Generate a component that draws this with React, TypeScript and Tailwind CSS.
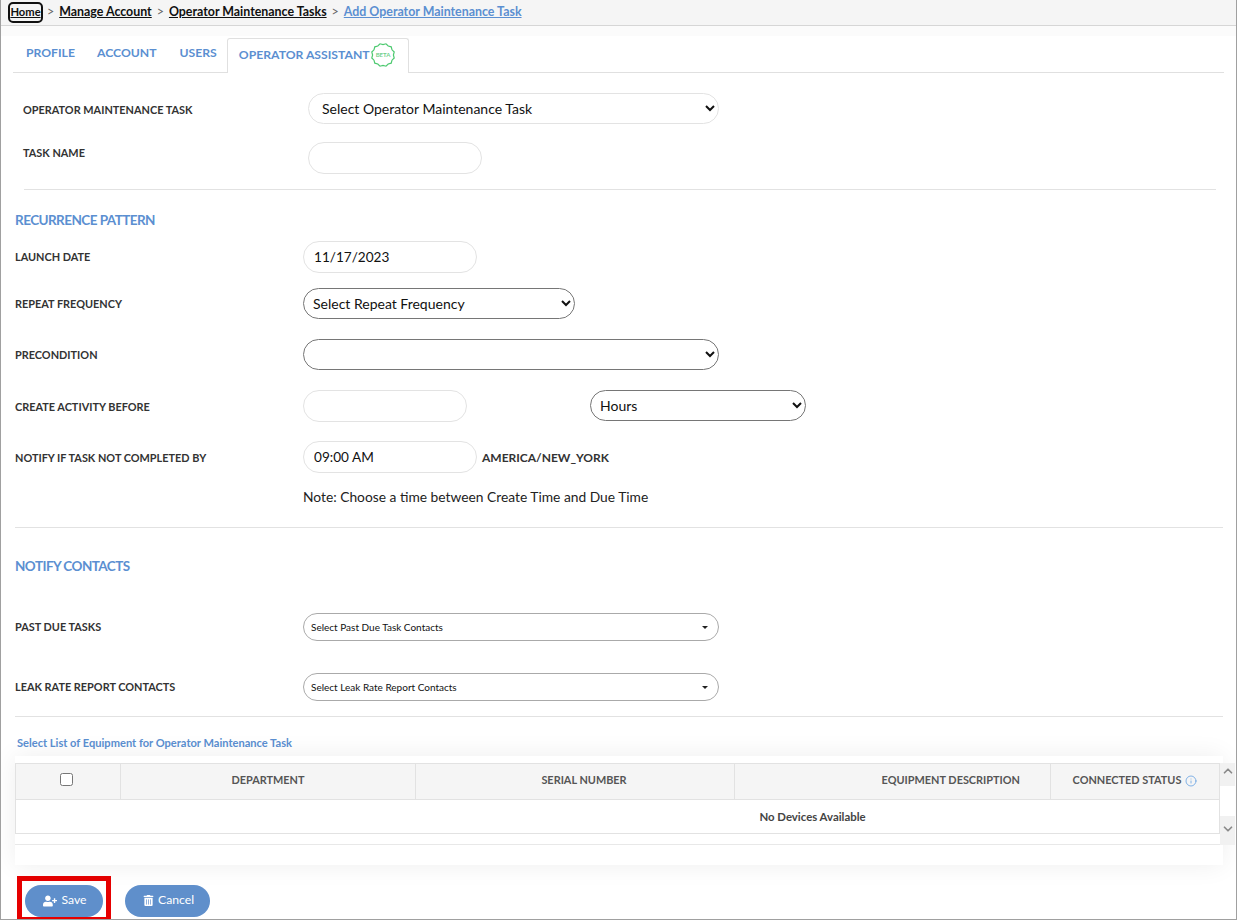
import { FaUserPlus, FaTrashAlt } from "react-icons/fa";
import { Info, ChevronUp, ChevronDown } from "lucide-react";

function Beta() {
  const pts: string[] = [];
  for (let i = 0; i < 24; i++) {
    const r = i % 2 ? 11.6 : 10.4;
    const a = (i * Math.PI) / 12;
    pts.push(`${12 + r * Math.cos(a)},${12 + r * Math.sin(a)}`);
  }
  return (
    <svg width="24" height="24" viewBox="0 0 24 24" className="ml-[1px] shrink-0">
      <polygon points={pts.join(" ")} fill="#fff" stroke="#4cc96f" strokeWidth="1.2" />
      <text x="12" y="14" textAnchor="middle" fontSize="6" fontWeight="700" fill="#6fd08c" fontFamily="Lato">BETA</text>
    </svg>
  );
}

function Input({ w, value }: { w: string; value?: string }) {
  return (
    <input
      readOnly
      value={value ?? ""}
      className={`${w} h-[32px] rounded-full border border-[#e3e3e3] bg-white px-[10px] text-[13.6px] text-[#111] outline-none`}
    />
  );
}

function Sel({ w, text, pl = "pl-[5px]" }: { w: string; text: string; pl?: string }) {
  return (
    <select className={`${w} ${pl} h-[31px] rounded-full border border-[#767676] bg-white text-[14px] text-[#111] outline-none`}>
      <option>{text}</option>
    </select>
  );
}

function Multi({ text }: { text: string }) {
  return (
    <div className="flex h-[28px] w-[416px] items-center justify-between rounded-full border border-[#aaa] bg-white pl-[7px] pr-[10px] text-[10px] text-[#111]">
      <span>{text}</span>
      <span className="h-0 w-0 border-x-[3px] border-t-[3px] border-x-transparent border-t-[#222]" />
    </div>
  );
}

function Label({ children, w = "w-[288px]", pt = "" }: { children: React.ReactNode; w?: string; pt?: string }) {
  return <div className={`${w} ${pt} shrink-0 text-[10.9px] font-bold text-[#333]`}>{children}</div>;
}

function Heading({ children, mt }: { children: React.ReactNode; mt: string }) {
  return <div className={`${mt} h-[18px] text-[13.5px] leading-[18px] font-bold tracking-[-0.55px] text-[#5b8fd1]`}>{children}</div>;
}

function Crumb({ children, blue }: { children: React.ReactNode; blue?: boolean }) {
  return <a className={`underline font-bold ${blue ? "text-[#5b8fd1]" : "text-[#111]"}`}>{children}</a>;
}

function Sep() {
  return <span className="mx-[5px] font-normal text-[#666]">&gt;</span>;
}

export default function App() {
  return (
    <div className="h-[920px] w-[1237px] overflow-hidden border-x border-b border-[#a0a0a0] bg-white font-['Lato',sans-serif]">
      <div className="flex h-[26px] items-center border-b border-[#d6d6d6] bg-[#f5f5f5] pl-[9px] text-[12.4px]">
        <a className="mr-[1px] w-[31px] rounded-[3px] text-center text-[11.2px] font-bold text-[#111] underline outline-2 outline-[#111]">Home</a>
        <Sep />
        <Crumb>Manage Account</Crumb>
        <Sep />
        <Crumb>Operator Maintenance Tasks</Crumb>
        <Sep />
        <Crumb blue>Add Operator Maintenance Task</Crumb>
      </div>
      <div className="h-[10px] bg-[#fbfbfb]" />

      <div className="ml-[12px] mr-[12px] flex h-[37px] items-end border-b border-[#e0e0e0] text-[12px] font-bold text-[#5b8fd1]">
        <div className="flex h-[36px] items-center pl-[13px] pb-[1px] text-[12.2px]">PROFILE</div>
        <div className="flex h-[36px] items-center pl-[22px] pb-[1px] text-[12.2px]">ACCOUNT</div>
        <div className="flex h-[36px] items-center pl-[23px] pb-[1px] text-[12.2px]">USERS</div>
        <div className="relative top-[1px] ml-[10px] flex h-[35px] w-[182px] items-center rounded-t-[3px] border border-b-0 border-[#e0e0e0] bg-white pb-[2px] pl-[11px] text-[12.2px]">
          OPERATOR ASSISTANT
          <Beta />
        </div>
      </div>

      <div className="mt-[20px] flex items-center pl-[22px]">
        <Label w="w-[285px]" pt="pt-[4px]">OPERATOR MAINTENANCE TASK</Label>
        <select className="h-[31px] w-[411px] rounded-full border border-[#e3e3e3] bg-white pl-[9px] text-[14px] text-[#111] outline-none">
          <option>Select Operator Maintenance Task</option>
        </select>
      </div>
      <div className="mt-[18px] flex items-start pl-[22px]">
        <div className="pt-[3px]">
          <Label w="w-[285px]">TASK NAME</Label>
        </div>
        <Input w="w-[174px]" />
      </div>

      <div className="ml-[23px] mr-[20px] mt-[15px] h-px bg-[#e2e2e2]" />

      <div className="pl-[14px]">
        <Heading mt="mt-[21px]">RECURRENCE PATTERN</Heading>
        <div className="mt-[12px] flex items-center">
          <Label>LAUNCH DATE</Label>
          <Input w="w-[174px]" value="11/17/2023" />
        </div>
        <div className="mt-[15px] flex items-center">
          <Label pt="pt-[2px]">REPEAT FREQUENCY</Label>
          <Sel w="w-[272px]" text="Select Repeat Frequency" />
        </div>
        <div className="mt-[20px] flex items-center">
          <Label pt="pt-[2px]">PRECONDITION</Label>
          <Sel w="w-[416px]" text="" />
        </div>
        <div className="mt-[20px] flex items-center">
          <Label pt="pt-[2px]">CREATE ACTIVITY BEFORE</Label>
          <Input w="w-[164px]" />
          <div className="ml-[123px] self-start">
            <Sel w="w-[216px]" text="Hours" />
          </div>
        </div>
        <div className="mt-[19px] flex items-center">
          <Label pt="pt-[2px]">NOTIFY IF TASK NOT COMPLETED BY</Label>
          <Input w="w-[174px]" value="09:00 AM" />
          <span className="ml-[5px] pt-[2px] text-[12px] font-bold text-[#333]">AMERICA/NEW_YORK</span>
        </div>
        <div className="mt-[14px] pl-[288px] text-[13.8px] leading-[20px] text-[#222]">Note: Choose a time between Create Time and Due Time</div>
      </div>

      <div className="ml-[14px] mr-[13px] mt-[20px] h-px bg-[#e2e2e2]" />

      <div className="pl-[14px]">
        <Heading mt="mt-[29px]">NOTIFY CONTACTS</Heading>
        <div className="mt-[38px] flex items-center">
          <Label>PAST DUE TASKS</Label>
          <Multi text="Select Past Due Task Contacts" />
        </div>
        <div className="mt-[32px] flex items-center">
          <Label>LEAK RATE REPORT CONTACTS</Label>
          <Multi text="Select Leak Rate Report Contacts" />
        </div>
      </div>

      <div className="ml-[14px] mr-[13px] mt-[15px] h-px bg-[#e2e2e2]" />

      <div className="ml-[16px] mt-[19px] h-[14px] text-[11.1px] leading-[14px] font-bold text-[#5b8fd1]">
        Select List of Equipment for Operator Maintenance Task
      </div>

      <div className="relative ml-[14px] mr-[13px] mt-[6px] bg-white pt-[7px] pb-[20px] shadow-[0_0_24px_rgba(0,0,0,0.07)]">
        <div className="mr-[3px] border-x border-[#e2e2e2] text-[10.9px] font-bold text-[#555]">
          <div className="flex h-[37px] border-y border-[#e2e2e2] bg-[#f5f5f5]">
            <div className="flex w-[105px] items-center justify-center border-r border-[#e2e2e2] pr-[4px]">
              <input type="checkbox" className="mb-[4px] h-[13px] w-[13px]" />
            </div>
            <div className="flex w-[295px] items-center justify-center border-r border-[#e2e2e2] pb-[2px]">DEPARTMENT</div>
            <div className="flex w-[319px] items-center justify-center border-r border-[#e2e2e2] pb-[2px] pl-[18px]">SERIAL NUMBER</div>
            <div className="flex w-[316px] items-center justify-end border-r border-[#e2e2e2] pb-[2px] pr-[30px]">EQUIPMENT DESCRIPTION</div>
            <div className="flex flex-1 items-center justify-center pb-[2px] pr-[1px] pl-[1px]">
              CONNECTED STATUS
              <Info size={12} strokeWidth={1.5} className="ml-[4px] text-[#5b9be0]" />
            </div>
          </div>
          <div className="flex h-[34px] items-center justify-center border-b border-[#e2e2e2] bg-white pl-[390px] text-[11.4px] text-[#444]">No Devices Available</div>
        </div>
        <div className="mr-[3px] h-[11px] border-b border-[#e8e8e8]" />

        <div className="absolute right-[-12px] top-[7px] flex h-[82px] w-[15px] flex-col items-center justify-between bg-[#f1f1f1] text-[#8a8a8a]">
          <ChevronUp size={14} strokeWidth={3} className="mt-[1px]" />
          <div className="absolute left-0 top-[23px] h-[30px] w-[15px] bg-white" />
          <ChevronDown size={14} strokeWidth={3} className="mb-[9px]" />
        </div>
      </div>

      <div className="mt-[11px] ml-[16px] flex items-start">
        <div className="h-[44px] w-[94px] shrink-0 border-[5px] border-b-[3px] border-[#e60000] pl-[3px] pt-[4px]">
          <button className="flex h-[32px] w-[78px] items-center justify-center rounded-full bg-[#5f8fcb] pb-[1px] pl-[2px] text-[12.2px] text-white">
            <FaUserPlus size={14} className="mr-[4px]" />
            Save
          </button>
        </div>
        <button className="ml-[14px] mt-[9px] flex h-[32px] w-[85px] items-center justify-center rounded-full bg-[#5f8fcb] pb-[1px] pl-[2px] text-[12.2px] text-white">
          <FaTrashAlt size={11} className="mr-[4px]" />
          Cancel
        </button>
      </div>
    </div>
  );
}
